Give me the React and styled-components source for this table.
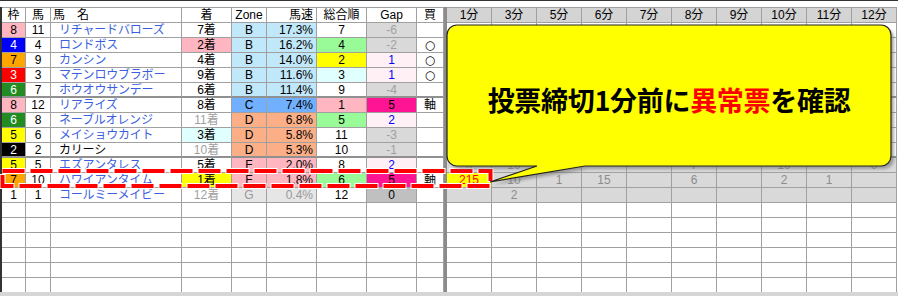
import React from 'react'
import styled, { createGlobalStyle } from 'styled-components'

const GlobalStyle = createGlobalStyle`
    body {
        margin: 0;
        background: #d6d6d6;
        font-family: "Noto Sans CJK JP", "DejaVu Sans", sans-serif;
    }
`

const Sheet = styled.div`
    position: relative;
    width: 898px;
    height: 292px;
    background: #fff;
    border-top: 1px solid #333;
    box-sizing: border-box;
    padding-top: 6px;
    overflow: hidden;
`
const Grid = styled.div`
    display: flex;
    border-left: 2px solid #333;
`
const Part = styled.div`
    display: flex;
    flex-direction: column;
`
const Divider = styled.div`
    width: 3px;
    background: #8c8c8c;
`
const Row = styled.div`
    display: flex;
    height: 15px;
    ${p => p.head && 'border-top: 1px solid #a0a0a0;'}
`
const Cell = styled.div`
    box-sizing: border-box;
    width: ${p => p.w}px;
    height: 100%;
    border-right: 1px solid #a0a0a0;
    border-bottom: ${p => (p.thick ? '2px solid #909090' : '1px solid #a0a0a0')};
    background: ${p => p.bg || 'transparent'};
    color: ${p => p.fg || '#000'};
    font-family: "Liberation Sans", "Noto Sans CJK JP", sans-serif;
    font-size: 12px;
    line-height: 12px;
    white-space: nowrap;
    display: flex;
    align-items: center;
    justify-content: ${p => p.align || 'center'};
    padding: ${p => (p.align === 'flex-end' ? '0 3px 0 0' : p.align === 'flex-start' ? '0 0 0 2px' : '0')};
`
const Name = styled.span`
    padding-left: ${p => p.pad}px;
    color: ${p => (p.plain ? '#000' : '#3b5fe0')};
    letter-spacing: -0.2px;
`
const Mark = styled.span`
    font-family: "DejaVu Sans", sans-serif;
    font-size: 12px;
    line-height: 12px;
`
const HeadCell = styled(Cell)`
    background: ${p => p.bg || '#fff'};
`

const Overlay = styled.svg`
    position: absolute;
    left: 0;
    top: 0;
    pointer-events: none;
`
const BubbleText = styled.div`
    position: absolute;
    left: 447px;
    top: 24px;
    width: 444px;
    height: 141px;
    display: flex;
    align-items: center;
    justify-content: center;
    padding-top: 8px;
    box-sizing: border-box;
    font-size: 27px;
    line-height: 32px;
    font-weight: 700;
    color: #000;
    letter-spacing: -0.3px;
`
const Alert = styled.span`
    color: #ff0000;
`

const WAKU = {
    1: ['#fff', '#000'], 2: ['#000', '#fff'], 3: ['#ff0000', '#fff'], 4: ['#0000ff', '#fff'],
    5: ['#ffff00', '#000'], 6: ['#228b22', '#fff'], 7: ['#ffa500', '#000'], 8: ['#ffb6c1', '#000'],
}
const ZONE = { B: '#c0e8fa', C: '#70b0ff', D: '#fcae86', F: '#ffb6c1', G: '#e6e6e6' }
const RANK = { 1: '#ffb6c1', 2: '#ffff00', 3: '#e0ffff', 4: '#98fb98', 5: '#98fb98', 6: '#98fb98' }

const horses = [
    [8, 11, 'リチャードバローズ', 7, '', 'B', '17.3%', 7, -6, ''],
    [4, 4, 'ロンドボス', 2, '#ffb6c1', 'B', '16.2%', 4, -2, '○'],
    [7, 9, 'カンシン', 4, '', 'B', '14.0%', 2, 1, '○'],
    [3, 3, 'マテンロウブラボー', 9, '', 'B', '11.6%', 3, 1, '○'],
    [6, 7, 'ホウオウサンデー', 6, '', 'B', '11.4%', 9, -4, ''],
    [8, 12, 'リアライズ', 8, '', 'C', '7.4%', 1, 5, '軸'],
    [6, 8, 'ネーブルオレンジ', 11, '', 'D', '6.8%', 5, 2, ''],
    [5, 6, 'メイショウカイト', 3, '#e0ffff', 'D', '5.8%', 11, -3, ''],
    [2, 2, 'カリーシ', 10, '', 'D', '5.3%', 10, -1, ''],
    [5, 5, 'エズアンタレス', 5, '', 'F', '2.0%', 8, 2, ''],
    [7, 10, 'ハワイアンタイム', 1, '#ffff00', 'F', '1.8%', 6, 5, '軸'],
    [1, 1, 'コールミーメイビー', 12, '', 'G', '0.4%', 12, 0, ''],
]

const minutes = ['1分', '3分', '5分', '6分', '7分', '8分', '9分', '10分', '11分', '12分']
const votes = {
    9: ['0', '10', '', '', '', '7', '', '10', '', '0'],
    10: ['215', '10', '1', '15', '', '6', '', '2', '1', ''],
    11: ['', '2', '', '', '', '', '', '', '', ''],
}

const gapStyle = g => {
    if (g < 0) return { bg: '#d9d9d9', fg: '#a0a0a0' }
    if (g === 0) return { bg: '#c0c0c0', fg: '#000' }
    if (g >= 5) return { bg: '#ff1493', fg: '#000' }
    return { bg: '#fff0f5', fg: '#0000ff' }
}

const W = [24, 25, 131, 50, 35, 50, 50, 50, 27]
const EMPTY = 6

const LeftTable = () => (
    <Part>
        <Row head>
            <HeadCell w={W[0]}>枠</HeadCell>
            <HeadCell w={W[1]}>馬</HeadCell>
            <HeadCell w={W[2]} align="flex-start">馬　名</HeadCell>
            <HeadCell w={W[3]}>着</HeadCell>
            <HeadCell w={W[4]}>Zone</HeadCell>
            <HeadCell w={W[5]} align="flex-end">馬速</HeadCell>
            <HeadCell w={W[6]}>総合順</HeadCell>
            <HeadCell w={W[7]}>Gap</HeadCell>
            <HeadCell w={W[8]}>買</HeadCell>
        </Row>
        {horses.map((h, i) => {
            const [waku, num, name, pos, posBg, zone, speed, rank, gap, buy] = h
            const thick = i === 4 || i === 8
            const g = gapStyle(gap)
            const dim = zone === 'G'
            return (
                <Row key={i}>
                    <Cell w={W[0]} thick={thick} bg={WAKU[waku][0]} fg={WAKU[waku][1]}>{waku}</Cell>
                    <Cell w={W[1]} thick={thick}>{num}</Cell>
                    <Cell w={W[2]} thick={thick} align="flex-start">
                        <Name pad={6} plain={name === 'カリーシ'}>{name}</Name>
                    </Cell>
                    <Cell w={W[3]} thick={thick} bg={posBg} fg={pos >= 10 ? '#a0a0a0' : '#000'}>{pos}着</Cell>
                    <Cell w={W[4]} thick={thick} bg={ZONE[zone]} fg={dim ? '#999' : '#000'}>{zone}</Cell>
                    <Cell w={W[5]} thick={thick} bg={ZONE[zone]} fg={dim ? '#999' : '#000'} align="flex-end">{speed}</Cell>
                    <Cell w={W[6]} thick={thick} bg={RANK[rank]}>{rank}</Cell>
                    <Cell w={W[7]} thick={thick} bg={g.bg} fg={g.fg}>{gap}</Cell>
                    <Cell w={W[8]} thick={thick}>{buy === '○' ? <Mark>{buy}</Mark> : buy}</Cell>
                </Row>
            )
        })}
        {Array.from({ length: EMPTY }).map((_, i) => (
            <Row key={'e' + i}>
                {W.map((w, j) => <Cell key={j} w={w} />)}
            </Row>
        ))}
    </Part>
)

const RightTable = () => (
    <Part>
        <Row head>
            {minutes.map(m => <HeadCell key={m} w={45} bg="#d4d4d4">{m}</HeadCell>)}
        </Row>
        {horses.map((_, i) => {
            const row = votes[i]
            const thick = i === 4 || i === 8
            return (
                <Row key={i}>
                    {minutes.map((m, j) => {
                        const v = row ? row[j] : ''
                        const hot = v === '215'
                        return (
                            <Cell key={m} w={45} thick={thick}
                                bg={hot ? '#ffff00' : row ? '#d9d9d9' : '#fff'}
                                fg={hot ? '#ff0000' : '#8c8c8c'}>
                                {v}
                            </Cell>
                        )
                    })}
                </Row>
            )
        })}
        {Array.from({ length: EMPTY }).map((_, i) => (
            <Row key={'e' + i}>
                {minutes.map(m => <Cell key={m} w={45} />)}
            </Row>
        ))}
    </Part>
)

const bubble = 'M457,24 H881 A10,10 0 0 1 891,34 V155 A10,10 0 0 1 881,165 H585 L490,181 L537,165 H457 A10,10 0 0 1 447,155 V34 A10,10 0 0 1 457,24 Z'

const App = () => {
    return (
        <>
            <GlobalStyle />
            <Sheet>
                <Grid>
                    <LeftTable />
                    <Divider />
                    <RightTable />
                </Grid>
                <Overlay width="898" height="292" viewBox="0 0 898 292">
                    <defs>
                        <filter id="soft" x="-5%" y="-5%" width="110%" height="120%">
                            <feGaussianBlur stdDeviation="1.5" />
                        </filter>
                    </defs>
                    <rect x="2.5" y="170" width="488" height="15" fill="none" stroke="#fff" strokeWidth="6" strokeDasharray="24 4" strokeDashoffset="1" />
                    <rect x="2.5" y="170" width="488" height="15" fill="none" stroke="#ff0000" strokeWidth="4" strokeDasharray="22 6" />
                    <path d={bubble} transform="translate(3,3)" fill="#707070" opacity="0.6" filter="url(#soft)" />
                    <path d={bubble} fill="#ffff00" stroke="#222" strokeWidth="1.2" />
                </Overlay>
                <BubbleText>
                    投票締切1分前に<Alert>異常票</Alert>を確認
                </BubbleText>
            </Sheet>
        </>
    )
}

export default App
